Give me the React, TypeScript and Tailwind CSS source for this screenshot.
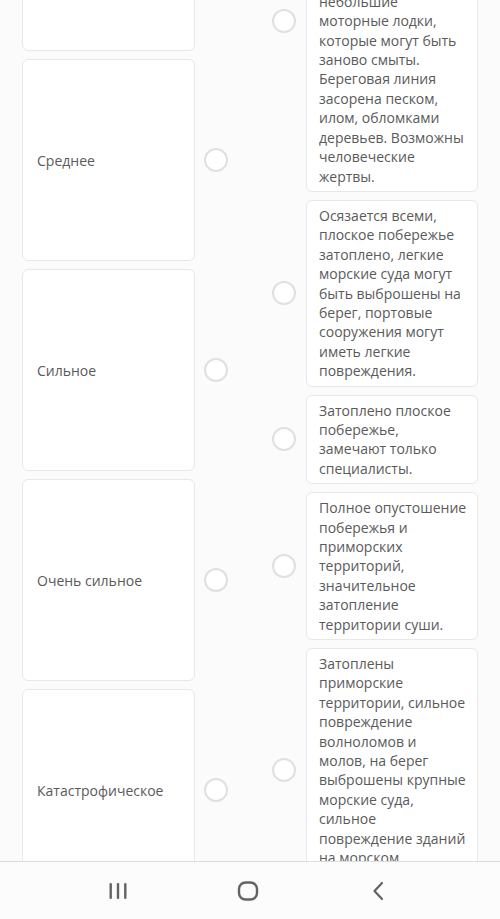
import React from 'react';

const leftItems = ['', 'Среднее', 'Сильное', 'Очень сильное', 'Катастрофическое'];

const rightItems: string[][] = [
  [
    'Затопление',
    'побережья на',
    'определенную глубину,',
    'портовые сооружения',
    'повреждены, на берег',
    'выброшены',
    'легкие суда и',
    'небольшие',
    'моторные лодки,',
    'которые могут быть',
    'заново смыты.',
    'Береговая линия',
    'засорена песком,',
    'илом, обломками',
    'деревьев. Возможны',
    'человеческие',
    'жертвы.',
  ],
  [
    'Осязается всеми,',
    'плоское побережье',
    'затоплено, легкие',
    'морские суда могут',
    'быть выброшены на',
    'берег, портовые',
    'сооружения могут',
    'иметь легкие',
    'повреждения.',
  ],
  ['Затоплено плоское', 'побережье,', 'замечают только', 'специалисты.'],
  [
    'Полное опустошение',
    'побережья и',
    'приморских',
    'территорий,',
    'значительное',
    'затопление',
    'территории суши.',
  ],
  [
    'Затоплены',
    'приморские',
    'территории, сильное',
    'повреждение',
    'волноломов и',
    'молов, на берег',
    'выброшены крупные',
    'морские суда,',
    'сильное',
    'повреждение зданий',
    'на морском',
    'побережье.',
  ],
];

const Radio = () => (
  <div className="h-6 w-6 shrink-0 rounded-full border-2 border-[#e0e0e0] bg-white" />
);

const NavBar = () => (
  <div className="absolute bottom-0 left-0 right-0 flex h-[58px] items-center border-t border-[#dcdcdc] bg-[#fcfcfc] pl-[53px]">
    <div className="flex w-[130px] justify-center">
      <svg width="20" height="18" viewBox="0 0 20 18" fill="none">
        <rect x="1.5" y="1" width="2.4" height="16" rx="1" fill="#636363" />
        <rect x="8.8" y="1" width="2.4" height="16" rx="1" fill="#636363" />
        <rect x="16.1" y="1" width="2.4" height="16" rx="1" fill="#636363" />
      </svg>
    </div>
    <div className="flex w-[130px] justify-center">
      <svg width="22" height="20" viewBox="0 0 22 20" fill="none">
        <rect x="2" y="1.5" width="18" height="17" rx="6.5" stroke="#636363" strokeWidth="2.4" />
      </svg>
    </div>
    <div className="flex w-[130px] justify-center">
      <svg width="14" height="20" viewBox="0 0 14 20" fill="none">
        <path d="M11 2 L3.5 10 L11 18" stroke="#636363" strokeWidth="2.2" strokeLinecap="round" strokeLinejoin="round" />
      </svg>
    </div>
  </div>
);

export default function App() {
  return (
    <div
      className="relative h-[919px] w-[500px] overflow-hidden bg-[#fbfbfb] text-[14px] text-[#5a5a5a]"
      style={{ fontFamily: '"Open Sans", "Noto Sans", sans-serif' }}
    >
      <div className="-mt-[150px] flex pl-[22px]">
        {/* left column: terms */}
        <div className="-mt-px flex flex-col gap-2">
          {leftItems.map((label, i) => (
            <div key={i} className="flex items-center">
              <div className="flex h-[202px] w-[173px] items-center rounded-md border border-[#e8e8e8] bg-white px-[14px]">
                {label}
              </div>
              <div className="ml-[9px]">
                <Radio />
              </div>
            </div>
          ))}
        </div>

        {/* right column: descriptions */}
        <div className="ml-[44px] flex flex-col gap-2">
          {rightItems.map((lines, i) => (
            <div key={i} className="flex items-center">
              <Radio />
              <div className="ml-[10px] w-[172px] rounded-md border border-[#e8e8e8] bg-white px-3 py-[5px] leading-[19.4px]">
                {lines.map((line, j) => (
                  <div key={j} className="whitespace-nowrap">
                    {line}
                  </div>
                ))}
              </div>
            </div>
          ))}
        </div>
      </div>

      <NavBar />
    </div>
  );
}
